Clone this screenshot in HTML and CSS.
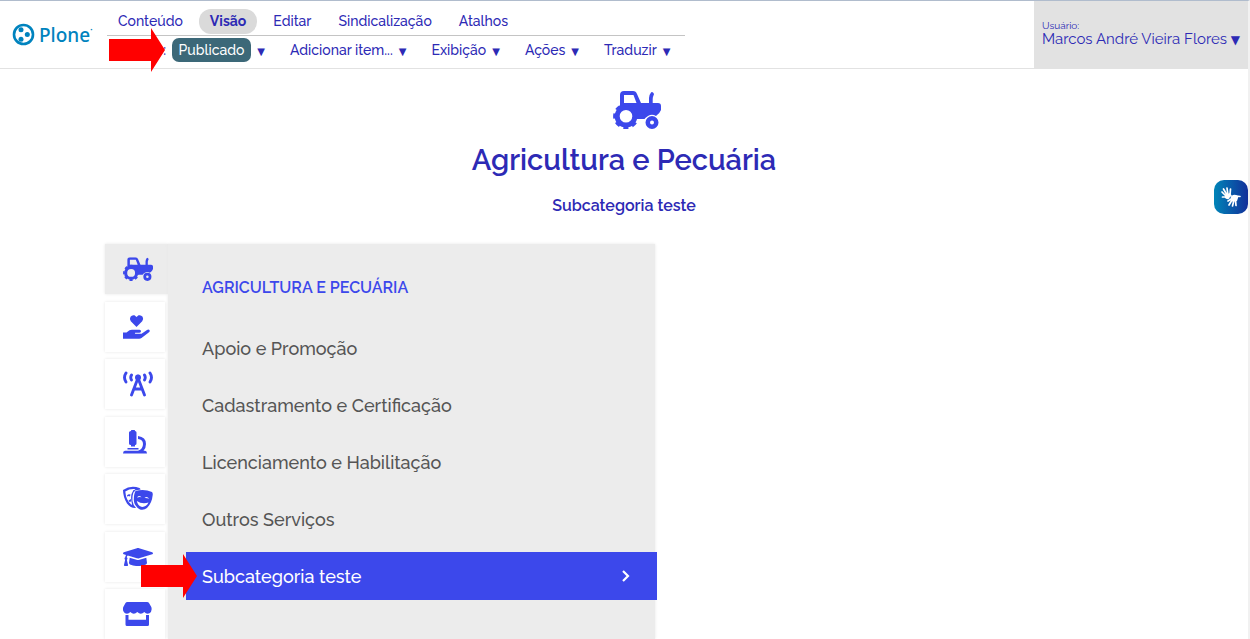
FILE: index.html
```html
<!DOCTYPE html>
<html lang="pt-br">
	<head>
		<meta charset="UTF-8">
		<meta name="viewport" content="width=device-width, initial-scale=1">
		<title>Agricultura e Pecuária</title>
		<link rel="stylesheet" href="styles.css">
	</head>
	<body>
		<!-- shared icon shapes -->
		<svg class="sprite" aria-hidden="true">
			<symbol id="tractor" viewBox="0 0 48 38">
				<path fill-rule="evenodd" d="M7 17V4Q7 0 11 0H20Q23 0 24 3L28 12H36V7Q36 4 38 1.500Q39 .5 40.500 2Q41.500 3 40.500 4.500Q39.700 6 39.700 8V12H45Q48 12 48 15V19Q47 22 43 25Q39 22.500 35 25Q32 27 31.500 28H22A9.500 9.500 0 0 0 8 17ZM11 12H23.500L20.500 4H11Z"/>
				<circle cx="13" cy="25.200" r="8.800" fill="none" stroke="#3c48eb" stroke-width="5"/>
				<circle cx="13" cy="25.200" r="11.500" fill="none" stroke="#3c48eb" stroke-width="2.800" stroke-dasharray="5 4.032" stroke-dashoffset="2.500"/>
				<path fill-rule="evenodd" d="M39 25A6.500 6.500 0 1 1 39 38A6.500 6.500 0 1 1 39 25ZM39 29.500A2 2 0 1 0 39 33.500A2 2 0 1 0 39 29.500Z"/>
			</symbol>
		</svg>

		<header class="toolbar">
			<a class="logo" href="#" aria-label="Plone">
				<svg width="23" height="23" viewBox="0 0 23 23">
					<circle cx="11.500" cy="11.500" r="9.500" fill="none" stroke="#0083be" stroke-width="2.600"/>
					<circle cx="9" cy="6.800" r="2.500"/>
					<circle cx="15.300" cy="11.500" r="2.500"/>
					<circle cx="9" cy="16.200" r="2.500"/>
				</svg>
				<span>Plone</span><sup>•</sup>
			</a>
			<nav class="menus">
				<ul class="views">
					<li><a href="#">Conteúdo</a></li>
					<li><a href="#" class="current">Visão</a></li>
					<li><a href="#">Editar</a></li>
					<li><a href="#">Sindicalização</a></li>
					<li><a href="#">Atalhos</a></li>
				</ul>
				<ul class="actions">
					<li><a href="#">Estado: <span class="state">Publicado</span><i>▼</i></a></li>
					<li><a href="#">Adicionar item...<i>▼</i></a></li>
					<li><a href="#">Exibição<i>▼</i></a></li>
					<li><a href="#">Ações<i>▼</i></a></li>
					<li><a href="#">Traduzir<i>▼</i></a></li>
				</ul>
				<svg class="arrow arrow-state" width="57" height="44" viewBox="0 0 57 44"><path d="M0 11H42V0L56 22L42 44V33H0Z"/></svg>
			</nav>
			<a class="user" href="#">
				<small>Usuário:</small>
				<span>Marcos André Vieira Flores <i>▼</i></span>
			</a>
		</header>

		<main>
			<div class="heading">
				<svg height="38" viewBox="0 0 48 38"><use href="#tractor"/></svg>
				<h1>Agricultura e Pecuária</h1>
				<h2>Subcategoria teste</h2>
			</div>

			<div class="categories">
				<nav class="tabs">
					<a href="#" class="active" aria-label="Agricultura e Pecuária">
						<svg width="30" height="24" viewBox="0 0 48 38"><use href="#tractor"/></svg>
					</a>
					<a href="#" aria-label="Assistência Social">
						<svg width="30" height="26" viewBox="0 0 30 26"><path d="M13.500 13L7.800 7.200Q6.200 5 7.500 2.700Q9 .6 11.500 1.300L13.500 3L15.500 1.300Q18 .6 19.600 2.700Q20.900 5 19.200 7.200Z"/><path d="M0 18.500H3.500L6.500 16.300Q7.500 15.800 9 15.800H16.500Q18 16 18 17.200Q18 18.500 16.500 18.700H12.200Q11.500 19.300 12.200 19.700H18.500L24 15.900Q25.500 15 26.500 16Q27.300 17.200 26 18.300L18.500 24Q17.500 24.700 16.200 24.700H0Z"/></svg>
					</a>
					<a href="#" aria-label="Comunicação">
						<svg width="30" height="26" viewBox="0 0 30 26"><g fill="none" stroke="#3c48eb" stroke-width="2.900" stroke-linecap="round"><path d="M8.500 24L15 7L21.500 24M11 18H19"/><path d="M3 2Q0 6.500 3 11M27 2Q30 6.500 27 11M8.500 4Q7 6.500 8.500 9M21.500 4Q23 6.500 21.500 9"/></g><circle cx="15" cy="6.500" r="3"/></svg>
					</a>
					<a href="#" aria-label="Ciência e Tecnologia">
						<svg width="30" height="26" viewBox="0 0 30 26"><path d="M8 1.500Q8 1 8.700 1H11.300Q12 1 12 1.500V2Q13.500 2 13.500 3.500V14.500Q13.500 16 12 16V17.500H8V16Q6 16 6 14.500V3.500Q6 2 8 2ZM4.500 19H15.500V20.500H4.500ZM15 7Q23 8 23 15Q23 19 20.500 21.800H22Q24 22 24 24.500H0Q0 22 2 21.800H15Q20 20 20 15Q20 10.500 15 10Z"/></svg>
					</a>
					<a href="#" aria-label="Cultura">
						<svg width="30" height="26" viewBox="0 0 30 26"><path fill-rule="evenodd" d="M0 4Q8-1.500 16.500 2Q17.500 2.500 17.600 3.500L12 4.500Q9 7 9.500 15Q10 19 13 22Q8 22.500 4 17.500Q0 11 0 4ZM2.300 5.500Q3 14.500 8.500 19L9 18Q7.500 13 8.500 8Q9.500 4.500 12.500 3.200Q7 2.500 2.300 5.500Z"/><path d="M4 9.500Q5.500 7.500 7.500 8.500L7 10.500Q6 9.500 4.200 10.500ZM5.500 14.500L8 13V15.500L6.500 16ZM10 4.500L11.500 4V5.500L10 6Z"/><path fill-rule="evenodd" d="M12.500 5Q21 2.500 29 6Q30 7 29.700 9Q29 17 24 22Q21 24.500 17 23.500Q11 20 10.800 14Q10.800 8 12.500 5ZM14 11.500Q15.500 8.500 18.500 11.200Q16 10.800 14 11.500ZM21.500 12Q24 9.500 26.200 12.800Q24 11.800 21.500 12ZM13.800 15Q19 18.500 25.500 16.500Q23 21.500 18.300 20.800Q14.800 19.500 13.800 15Z"/></svg>
					</a>
					<a href="#" aria-label="Educação">
						<svg width="30" height="24" viewBox="0 0 640 512"><path d="M622.340 153.200L343.400 67.500c-15.200-4.670-31.600-4.670-46.790 0L17.660 153.200c-23.540 7.230-23.540 38.360 0 45.590l48.630 14.940c-10.670 13.190-17.230 29.280-17.880 46.900C38.780 266.150 32 276.110 32 288c0 10.780 5.680 19.850 13.860 25.650L20.330 428.530C18.110 438.520 25.710 448 35.940 448h56.110c10.240 0 17.840-9.480 15.620-19.470L82.140 313.650C90.320 307.850 96 298.780 96 288c0-11.570-6.470-21.250-15.660-26.870.76-15.020 8.440-28.300 20.690-36.720L296.600 284.500c9.060 2.780 26.440 6.250 46.790 0l278.950-85.700c23.550-7.240 23.550-38.360 0-45.600zM352.790 315.090c-28.530 8.760-52.840 3.920-65.590 0l-145.020-44.550L128 384c0 35.350 85.960 64 192 64s192-28.650 192-64l-14.180-113.470-145.030 44.560z"/></svg>
					</a>
					<a href="#" aria-label="Empresas">
						<svg width="30" height="26" viewBox="0 0 30 26"><path d="M4.500 1H24Q25.500 1 26 2L28.300 6Q29.500 10 26.500 12.200Q23.500 13.500 21.300 11Q17.800 14.500 14.300 11Q10.800 14.500 7.300 11Q5 13.500 2 12.200Q-1 10 .3 6L2.500 2Q3 1 4.500 1Z"/><path d="M2.500 14H5.500V18.700H23V14H26V23.500Q26 25 24.500 25H4Q2.500 25 2.500 23.500Z"/></svg>
					</a>
				</nav>
				<section class="panel">
					<h3>Agricultura e Pecuária</h3>
					<ul>
						<li><a href="#">Apoio e Promoção</a></li>
						<li><a href="#">Cadastramento e Certificação</a></li>
						<li><a href="#">Licenciamento e Habilitação</a></li>
						<li><a href="#">Outros Serviços</a></li>
						<li><a href="#" class="selected">Subcategoria teste
							<svg width="8" height="12" viewBox="0 0 8 12"><path d="M1 1L6 6L1 11" fill="none" stroke="#fff" stroke-width="2.200"/></svg>
						</a></li>
					</ul>
				</section>
				<svg class="arrow arrow-item" width="57" height="44" viewBox="0 0 57 44"><path d="M0 11H42V0L56 22L42 44V33H0Z"/></svg>
			</div>
		</main>

		<button class="libras" aria-label="Acessível em Libras">
			<svg width="22" height="22" viewBox="0 0 22 22">
				<g fill="none" stroke="#fff" stroke-width="1.700" stroke-linecap="round"><path d="M6 10L2 6M7 9L3.500 3M8 9L7 2M10 9L10.500 3M5.500 11L2.500 11M12 14L9 19M14 14L12.500 20M15.500 14L16 19.500M13 12L8 15M16 10L20 10.500"/></g>
				<path d="M5 9L10 7L12 10Q9 11 9.500 12.500Q7 14 5 12ZM10.500 12Q12 8 16 9L18.500 10.500L17 15L12 15.500Z" fill="#fff"/>
			</svg>
		</button>
	</body>
</html>
```
FILE: styles.css
```css
* {
	box-sizing: border-box;
}
body {
	margin: 0;
	border-top: 1px solid #b0bccd;
	border-right: 2px solid #f1f1f1;
	background: #fff;
	color: #2d2ab5;
	font-family: Raleway, Lato, sans-serif;
	font-size: 14px;
	font-weight: 500;
}
ul {
	margin: 0;
	padding: 0;
	list-style: none;
}
a {
	color: inherit;
	text-decoration: none;
}
svg {
	fill: #3c48eb;
}
.sprite {
	display: none;
}

/* toolbar */
.toolbar {
	display: flex;
	height: 68px;
	border-bottom: 1px solid #e2e2e2;
}
.logo {
	display: flex;
	align-items: center;
	width: 107px;
	padding-left: 12px;
	color: #0083be;
	font-family: "Noto Sans", sans-serif;
	font-size: 19px;
}
.logo svg {
	margin-right: 4px;
	fill: #0083be;
}
.logo sup {
	margin-bottom: 10px;
	font-size: 6px;
}
.menus {
	position: relative;
	width: 578px;
	padding-top: 6px;
}
.views,
.actions {
	display: flex;
	align-items: center;
	white-space: nowrap;
}
.views {
	gap: 5px;
	height: 29px;
	border-bottom: 1px solid #c4c4c4;
}
.views a {
	display: block;
	padding: 0 11px;
	border-radius: 12px;
	line-height: 25px;
}
.views .current {
	background: #dadada;
	font-weight: bold;
}
.actions {
	gap: 25px;
	height: 28px;
	padding-left: 11px;
}
.state {
	display: inline-block;
	margin-left: 2px;
	padding: 0 7px;
	border-radius: 7px;
	background: #3c6878;
	color: #fff;
	line-height: 24px;
}
i {
	font-family: "DejaVu Sans", sans-serif;
	font-size: 10px;
	font-style: normal;
	line-height: 10px;
}
.actions i {
	margin-left: 6px;
}
.user {
	display: flex;
	flex-direction: column;
	width: 214px;
	height: 68px;
	margin-left: auto;
	padding: 19px 0 0 8px;
	background: #e2e2e2;
	font-size: 15px;
	font-weight: 400;
	line-height: 17px;
	white-space: nowrap;
}
.user small {
	font-size: 10px;
	line-height: 11px;
}
.user i {
	font-size: 12px;
}

/* page heading */
main {
	width: 1038px;
	max-width: 100%;
	margin: 0 auto;
}
.heading {
	padding-top: 22px;
	text-align: center;
}
.heading svg {
	display: block;
	width: 74px;
	margin: 0 auto;
	padding-left: 26px;
}
h1 {
	margin: 13px 0 0;
	font-size: 29px;
	font-weight: 600;
	line-height: 36px;
}
h2 {
	margin: 18px 0 0;
	font-size: 16px;
	font-weight: 600;
	line-height: 20px;
}

/* category browser */
.categories {
	position: relative;
	display: flex;
	margin-top: 28px;
	height: 395px;
}
.tabs {
	display: flex;
	flex-direction: column;
	justify-content: space-between;
	width: 63px;
}
.tabs a {
	display: flex;
	align-items: center;
	width: 60px;
	height: 50px;
	padding-left: 18px;
	box-shadow: 0 0 3px #e6e6e6;
}
.tabs .active {
	width: 63px;
	background: #ececec;
}
.panel {
	width: 487px;
	padding: 34px 0 0 18px;
	background: #ececec;
	box-shadow: 0 0 3px #e6e6e6;
}
h3 {
	margin: 0 0 26px;
	padding-left: 16px;
	color: #3c48eb;
	font-size: 16px;
	font-weight: 600;
	line-height: 20px;
	text-transform: uppercase;
}
.panel li {
	margin: 0 -2px 9px 0;
}
.panel li a {
	display: flex;
	align-items: center;
	justify-content: space-between;
	height: 48px;
	padding: 0 27px 0 16px;
	color: #555;
	font-size: 18px;
}
.panel li .selected {
	background: #3c48eb;
	color: #fff;
}

/* pointer arrows over the page */
.arrow {
	position: absolute;
	fill: #f00;
}
.arrow-state {
	left: 2px;
	top: 27px;
}
.arrow-item {
	left: 36px;
	top: 310px;
}

.libras {
	position: fixed;
	top: 180px;
	right: 2px;
	display: flex;
	align-items: center;
	justify-content: center;
	width: 34px;
	height: 34px;
	padding: 0;
	border: 0;
	border-radius: 10px;
	background: linear-gradient(90deg, #0085b8, #12309a);
}
```
